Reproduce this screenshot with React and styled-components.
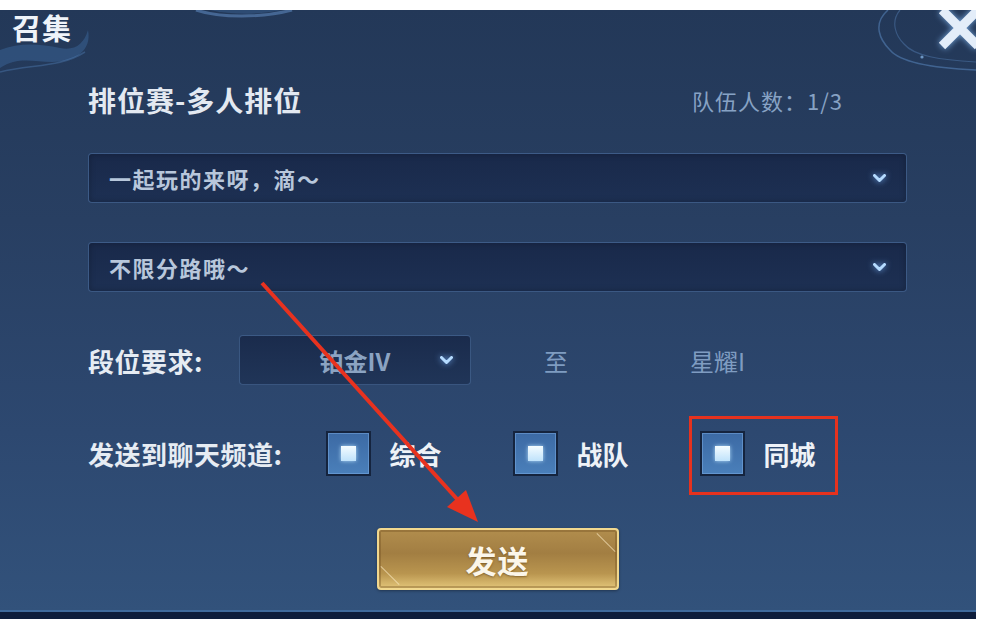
import React from 'react';
import styled, { createGlobalStyle } from 'styled-components';

const GlobalStyle = createGlobalStyle`
  body {
    margin: 0;
    background: #ffffff;
    font-family: "Noto Sans CJK SC", "Noto Sans", sans-serif;
  }
`;

const Screen = styled.div`
  width: 976px;
  padding-top: 10px;
`;

const Panel = styled.div`
  position: relative;
  height: 602px;
  overflow: hidden;
  display: flex;
  flex-direction: column;
  background: linear-gradient(180deg, #233858 0%, #283f62 35%, #2d4870 70%, #32527b 100%);
  box-shadow: inset 0 -2px 0 #3f6a9c;
`;

const Footer = styled.div`
  height: 7px;
  background: #0e1d3b;
`;

const Deco = styled.svg`
  position: absolute;
  left: 0;
  top: 0;
  z-index: 0;
  pointer-events: none;
`;

const Header = styled.div`
  position: relative;
  z-index: 1;
  height: 44px;
  display: flex;
  justify-content: space-between;
  align-items: flex-start;
`;

const PageTitle = styled.div`
  margin: 1px 0 0 12px;
  font-size: 29px;
  line-height: 32px;
  font-weight: 700;
  color: #eef3f9;
  letter-spacing: 1px;
`;

const Close = styled.svg`
  margin: -6px -8px 0 0;
  filter: drop-shadow(0 0 3px rgba(140, 195, 255, 0.8));
`;

const Body = styled.div`
  position: relative;
  z-index: 1;
  display: flex;
  flex-direction: column;
  padding: 0 69px 0 88px;
`;

const TitleRow = styled.div`
  margin-top: 29px;
  height: 34px;
  display: flex;
  align-items: center;
  justify-content: space-between;
  padding-right: 64px;
`;

const Heading = styled.div`
  font-size: 28px;
  font-weight: 700;
  letter-spacing: 1px;
  color: #e3e9f1;
`;

const TeamCount = styled.div`
  font-size: 22px;
  color: #87a2c4;
  letter-spacing: 1px;
`;

const Select = styled.div`
  margin-top: ${(p) => p.$top}px;
  height: 50px;
  box-sizing: border-box;
  display: flex;
  align-items: center;
  padding: 0 20px;
  border: 1px solid rgba(88, 128, 178, 0.55);
  border-radius: 4px;
  background: linear-gradient(180deg, #19294a 0%, #1d3053 100%);
  box-shadow: inset 0 0 6px rgba(0, 0, 0, 0.25);
`;

const SelectText = styled.span`
  flex: 1;
  font-size: 22px;
  font-weight: 700;
  letter-spacing: 1.5px;
  color: #b8c7db;
`;

const Chevron = () => (
  <ChevronSvg width="13" height="9" viewBox="0 0 13 9">
    <path d="M1.5 1.5 L6.5 6.5 L11.5 1.5" fill="none" stroke="#b5dbff" strokeWidth="3" strokeLinecap="round" strokeLinejoin="round" />
  </ChevronSvg>
);

const ChevronSvg = styled.svg`
  flex: none;
  filter: drop-shadow(0 0 3px rgba(120, 180, 255, 0.9));
`;

const Row = styled.div`
  margin-top: ${(p) => p.$top}px;
  height: ${(p) => p.$height}px;
  display: flex;
  align-items: center;
`;

const Label = styled.div`
  font-size: 26px;
  font-weight: 700;
  letter-spacing: 0.5px;
  color: #e6ecf3;
  margin-right: ${(p) => p.$gap}px;
`;

const RankSelect = styled.div`
  width: 232px;
  height: 50px;
  box-sizing: border-box;
  display: flex;
  align-items: center;
  padding: 0 17px 0 30px;
  border: 1px solid rgba(88, 128, 178, 0.5);
  border-radius: 4px;
  background: linear-gradient(180deg, #1a2b4c 0%, #203558 100%);
`;

const RankValue = styled.span`
  flex: 1;
  text-align: center;
  font-size: 24px;
  font-weight: 700;
  color: #8ba3c2;
`;

const Plain = styled.span`
  font-size: 24px;
  color: #7f9cc1;
  margin-left: ${(p) => p.$left}px;
`;

const Options = styled.div`
  display: flex;
  align-items: center;
  gap: 72px;
`;

const Option = styled.div`
  position: relative;
  display: flex;
  align-items: center;
  gap: 18px;

  ${(p) =>
    p.$marked &&
    `
    &::after {
      content: '';
      position: absolute;
      top: -15px;
      bottom: -19px;
      left: -11px;
      right: -22px;
      border: 3px solid #e6321e;
    }
  `}
`;

const Box = styled.div`
  width: 45px;
  height: 45px;
  box-sizing: border-box;
  display: flex;
  align-items: center;
  justify-content: center;
  border: 2px solid #15243e;
  background: linear-gradient(180deg, #3c6aa4 0%, #4a7fba 100%);
  box-shadow: inset 0 0 0 1px rgba(130, 180, 235, 0.45);
`;

const Tick = styled.div`
  width: 15px;
  height: 15px;
  background: linear-gradient(180deg, #f4fcff 0%, #bfe2fb 100%);
  box-shadow: 0 0 4px rgba(190, 230, 255, 0.9);
`;

const OptionText = styled.span`
  font-size: 26px;
  font-weight: 700;
  color: #eef2f7;
`;

const ButtonRow = styled.div`
  margin-top: 52px;
  display: flex;
  justify-content: center;
`;

const SendButton = styled.button`
  position: relative;
  width: 242px;
  height: 62px;
  border: 2px solid #f1d88f;
  border-radius: 4px;
  background: linear-gradient(180deg, #b18d4d 0%, #a27e42 40%, #b9954f 75%, #e2c478 100%);
  box-shadow: inset 0 0 0 2px rgba(110, 75, 30, 0.35), 0 1px 3px rgba(0, 0, 0, 0.35);
  font-family: inherit;
  font-size: 31px;
  font-weight: 700;
  color: #fbf6ea;
  letter-spacing: 1px;
  text-shadow: 0 1px 2px rgba(80, 50, 10, 0.5);
  cursor: pointer;

  &::before,
  &::after {
    content: '';
    position: absolute;
    width: 26px;
    height: 1px;
    background: rgba(255, 238, 200, 0.6);
    transform: rotate(45deg);
  }
  &::before {
    top: 12px;
    right: -2px;
  }
  &::after {
    bottom: 12px;
    left: -2px;
  }
`;

const Arrow = styled.svg`
  position: absolute;
  left: 0;
  top: 0;
  z-index: 2;
  pointer-events: none;
`;

const channels = [
  { name: '综合' },
  { name: '战队' },
  { name: '同城', marked: true },
];

export default function App() {
  return (
    <>
      <GlobalStyle />
      <Screen>
        <Panel>
          <Deco width="976" height="90" viewBox="0 0 976 90">
            <path d="M0 40 C20 32 40 34 60 38 C75 41 84 34 88 20 C92 40 76 52 52 52 C34 52 18 46 0 58 Z" fill="rgba(70,120,180,0.35)" />
            <path d="M0 62 C30 54 60 58 85 42" fill="none" stroke="rgba(90,140,200,0.35)" strokeWidth="1.5" />
            <path d="M196 0 C220 8 262 8 292 0" fill="none" stroke="rgba(110,160,220,0.45)" strokeWidth="3" />
            <path d="M210 0 C232 5 260 5 282 0" fill="rgba(70,120,180,0.3)" />
            <path d="M888 0 C872 14 880 30 890 40 C900 52 930 58 976 60" fill="none" stroke="rgba(100,150,210,0.45)" strokeWidth="1.5" />
            <path d="M900 0 C890 12 896 26 904 34 C914 46 940 50 976 52" fill="none" stroke="rgba(100,150,210,0.35)" strokeWidth="1.2" />
            <circle cx="922" cy="47" r="1.6" fill="rgba(140,190,240,0.7)" />
          </Deco>

          <Header>
            <PageTitle>召集</PageTitle>
            <Close width="48" height="48" viewBox="0 0 48 48">
              <path d="M6 6 L42 42 M42 6 L6 42" stroke="#e3edf9" strokeWidth="9" strokeLinecap="butt" />
            </Close>
          </Header>

          <Body>
            <TitleRow>
              <Heading>排位赛-多人排位</Heading>
              <TeamCount>队伍人数：1/3</TeamCount>
            </TitleRow>

            <Select $top={36}>
              <SelectText>一起玩的来呀，滴～</SelectText>
              <Chevron />
            </Select>

            <Select $top={39}>
              <SelectText>不限分路哦～</SelectText>
              <Chevron />
            </Select>

            <Row $top={43} $height={50}>
              <Label $gap={36}>段位要求:</Label>
              <RankSelect>
                <RankValue>铂金IV</RankValue>
                <Chevron />
              </RankSelect>
              <Plain $left={73}>至</Plain>
              <Plain $left={122}>星耀I</Plain>
            </Row>

            <Row $top={46} $height={45}>
              <Label $gap={44}>发送到聊天频道:</Label>
              <Options>
                {channels.map((c) => (
                  <Option key={c.name} $marked={c.marked}>
                    <Box>
                      <Tick />
                    </Box>
                    <OptionText>{c.name}</OptionText>
                  </Option>
                ))}
              </Options>
            </Row>

            <ButtonRow>
              <SendButton>发送</SendButton>
            </ButtonRow>
          </Body>

          <Arrow width="976" height="602" viewBox="0 0 976 602">
            <line x1="262" y1="273" x2="457" y2="489" stroke="#e8321f" strokeWidth="4" />
            <polygon points="478,512 447,497 466,480" fill="#e8321f" />
          </Arrow>
        </Panel>
        <Footer />
      </Screen>
    </>
  );
}
